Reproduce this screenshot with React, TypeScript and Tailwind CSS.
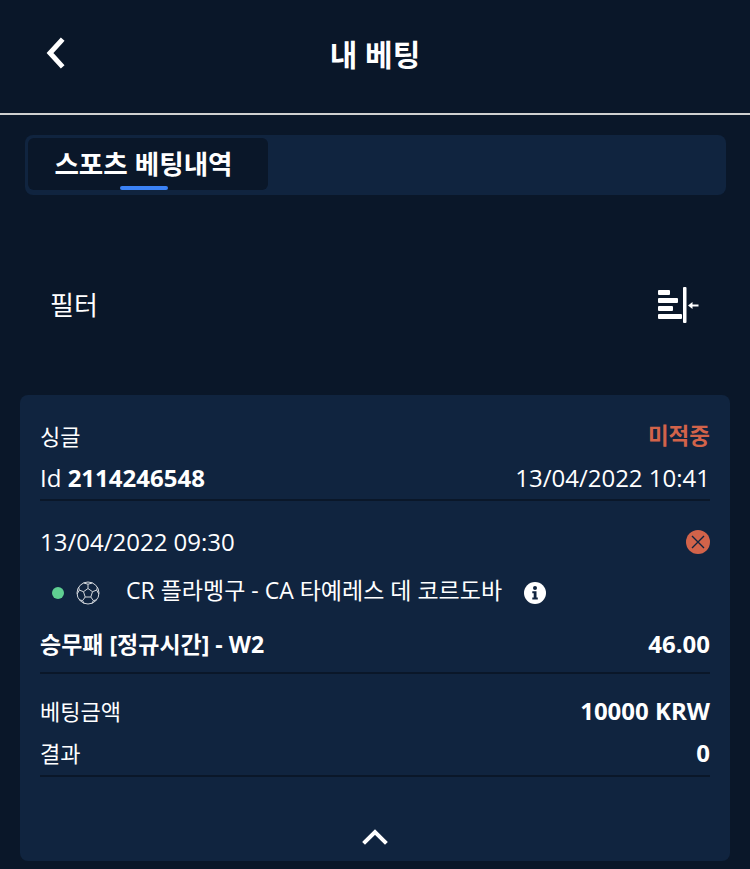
const font = "font-['Open_Sans','Noto_Sans_CJK_KR',sans-serif]";

const Soccer = () => (
  <svg viewBox="0 0 24 24" className="h-6 w-6" fill="none" stroke="#d5d9de" strokeWidth="1">
    <circle cx="12" cy="12" r="11" />
    <path d="M12 7.500l4.500 3.200-1.700 5.300H9.200l-1.700-5.300z" />
    <path d="M12 7.500V3.200M12 3.200L7.600 2M12 3.200l4.400-1.200M16.500 10.700l4.200-1.600M20.700 9.100l.7-3M20.700 9.100l2 3.800M14.800 16l2.600 3.600M17.400 19.600l3.300-.8M17.400 19.600l-1.600 3M9.200 16l-2.600 3.600M6.600 19.600l-3.300-.8M6.600 19.600l1.600 3M7.500 10.700L3.300 9.100M3.300 9.100l-.7-3M3.300 9.100l-2 3.800" />
  </svg>
);

const Info = () => (
  <svg viewBox="0 0 22 22" className="h-[22px] w-[22px]">
    <circle cx="11" cy="11" r="11" fill="#fff" />
    <circle cx="11" cy="6" r="2" fill="#10243f" />
    <path d="M8.300 9.300h4.200v6.200h1.300v2H8.300v-2h1.400v-4.200H8.300z" fill="#10243f" />
  </svg>
);

const FilterIcon = () => (
  <svg viewBox="0 0 42 36" className="h-9 w-[42px]" fill="#fff">
    <rect x="0" y="3" width="12" height="5" rx="1" />
    <rect x="0" y="11" width="20" height="5" rx="1" />
    <rect x="0" y="19" width="15" height="5" rx="1" />
    <rect x="0" y="27" width="24" height="5" rx="1" />
    <rect x="25" y="0" width="3.500" height="36" rx="1" />
    <path d="M30 18.500l4.500-3.500v2.500h6v2h-6v2.500z" />
  </svg>
);

export default function App() {
  return (
    <div className={`${font} h-[869px] w-[750px] overflow-hidden bg-[#0a1729] text-white`}>
      <div className="relative flex h-[115px] items-center justify-center border-b-2 border-[#d0d0d0]">
        <svg viewBox="0 0 20 32" className="absolute left-[45px] top-[37px] h-8 w-5" fill="none" stroke="#fff" strokeWidth="5" strokeLinecap="square">
          <path d="M16 4L5 16l11 12" />
        </svg>
        <p className="pb-[5px] text-[30px] font-bold">내 베팅</p>
      </div>

      <div className="mx-[25px] mt-5 flex h-[60px] w-[701px] rounded-lg bg-[#10243f] p-[3px] pb-1">
        <div className="relative flex h-[52px] w-[240px] items-center justify-center rounded-md bg-[#0a1729]">
          <p className="pr-[9px] text-[26.600px] leading-none font-bold">스포츠 베팅내역</p>
          <span className="absolute bottom-0 left-[92px] h-1 w-12 rounded-sm bg-[#3b82f6]" />
        </div>
      </div>

      <div className="flex h-[200px] items-center justify-between pt-5 pr-[50px] pl-[50px]">
        <p className="text-[26px]">필터</p>
        <FilterIcon />
      </div>

      <div className="mx-5 h-[466px] rounded-lg bg-[#10243f] px-5 pt-[22px]">
        <div className="flex h-[38px] items-center justify-between text-[22px]">
          <span>싱글</span>
          <span className="text-[22.500px] font-bold text-[#d2634a]">미적중</span>
        </div>
        <div className="flex h-[46px] items-center justify-between border-b-2 border-[#0a1729] pt-0.5 text-[24px]">
          <span>
            Id <b>2114246548</b>
          </span>
          <span>13/04/2022 10:41</span>
        </div>

        <div className="mt-[19px] flex h-[44px] items-center justify-between text-[24px]">
          <span>13/04/2022 09:30</span>
          <span className="flex h-6 w-6 items-center justify-center rounded-full bg-[#d2634a]">
            <svg viewBox="0 0 16 16" className="h-4 w-4" stroke="#10243f" strokeWidth="1.400">
              <path d="M2 2l12 12M14 2L2 14" />
            </svg>
          </span>
        </div>
        <div className="flex h-[52px] items-center pl-3 text-[23px]">
          <span className="mt-1.5 h-3 w-3 rounded-full bg-[#5fcf92]" />
          <span className="mt-1.5 ml-3">
            <Soccer />
          </span>
          <span className="ml-[26px]">CR 플라멩구 - CA 타예레스 데 코르도바</span>
          <span className="mt-1.5 ml-[22px]">
            <Info />
          </span>
        </div>
        <div className="flex h-[58px] items-center justify-between border-b-2 border-[#0a1729] text-[23px] font-bold">
          <span>승무패 [정규시간] - W2</span>
          <span className="text-[24px]">46.00</span>
        </div>

        <div className="mt-4 flex h-[42px] items-center justify-between text-[22px]">
          <span>베팅금액</span>
          <span className="text-[24px] font-bold">10000 KRW</span>
        </div>
        <div className="flex h-[45px] items-center justify-between border-b-2 border-[#0a1729] pb-px text-[22px]">
          <span>결과</span>
          <span className="text-[24px] font-bold">0</span>
        </div>

        <div className="flex justify-center pt-[52px]">
          <svg viewBox="0 0 26 16" className="h-4 w-[26px]" fill="none" stroke="#fff" strokeWidth="4" strokeLinecap="square">
            <path d="M3 13L13 3l10 10" />
          </svg>
        </div>
      </div>
    </div>
  );
}
